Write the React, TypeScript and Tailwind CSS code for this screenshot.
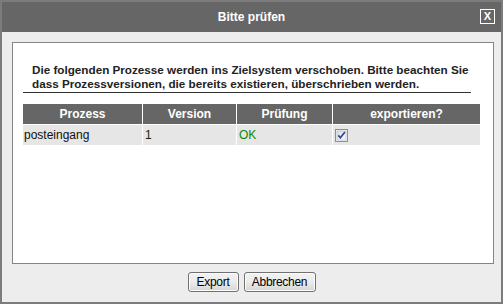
import React from 'react'

const cols = ['w-[119px]', 'w-[93px]', 'w-[95px]', 'w-[147px]']

function CheckBox() {
  return (
    <svg width="13" height="13" viewBox="0 0 13 13" className="block">
      <defs>
        <linearGradient id="cb" x1="0" y1="0" x2="1" y2="1">
          <stop offset="0" stopColor="#dcdcdc" />
          <stop offset="1" stopColor="#fbfbfb" />
        </linearGradient>
      </defs>
      <rect x="0.5" y="0.5" width="12" height="12" fill="#f4f4f4" stroke="#8e8f8f" />
      <rect x="2" y="2" width="9" height="9" fill="url(#cb)" stroke="#b6b7b8" strokeWidth="0.6" />
      <path d="M3.3 6.4 L5.4 8.8 L9.9 2.9" fill="none" stroke="#29439b" strokeWidth="1.6" />
    </svg>
  )
}

function Button({ label, w }: { label: string; w: string }) {
  return (
    <button
      className={`${w} h-[20px] rounded-[3px] border border-[#707070] bg-gradient-to-b from-[#f2f2f2] via-[#ebebeb] to-[#d6d6d6] text-[12px] leading-none text-black tracking-[-0.3px] shadow-[inset_0_0_0_1px_#fcfcfc]`}
    >
      {label}
    </button>
  )
}

export default function App() {
  return (
    <div className="w-[503px] h-[304px] bg-[#ededed] border-2 border-[#7c7c7c] font-['Liberation_Sans',Arial,sans-serif] flex flex-col">
      {/* title bar */}
      <div className="h-[30px] bg-[#666666] flex items-center justify-center relative shrink-0">
        <span className="text-white font-bold text-[12px]">Bitte prüfen</span>
        <div className="absolute left-[478px] top-[7px] w-[15px] h-[15px] border border-white flex items-center justify-center">
          <span className="text-white font-bold text-[11px] leading-none">X</span>
        </div>
      </div>

      {/* content panel */}
      <div className="ml-[10px] mt-[10px] w-[482px] h-[222px] bg-white border border-[#858585] shrink-0 px-[10px]">
        <div className="mt-[20px] w-[448px] border-b border-[#333333] pl-[9px] pb-[1px] text-[11.7px] leading-[14px] font-bold text-[#222222] whitespace-nowrap">
          Die folgenden Prozesse werden ins Zielsystem verschoben. Bitte beachten Sie
          <br />
          dass Prozessversionen, die bereits existieren, überschrieben werden.
        </div>

        <div className="mt-[11px] flex flex-col gap-px">
          <div className="flex gap-px">
            {['Prozess', 'Version', 'Prüfung', 'exportieren?'].map((h, i) => (
              <div key={h} className={`${cols[i]} h-[20px] bg-[#666666] text-white font-bold text-[12px] flex items-center justify-center`}>
                {h}
              </div>
            ))}
          </div>
          <div className="flex gap-px text-[12px]">
            <div className={`${cols[0]} h-[20px] bg-[#e6e6e6] pl-[1px] flex items-center text-[#111111]`}>posteingang</div>
            <div className={`${cols[1]} h-[20px] bg-[#e6e6e6] pl-[2px] flex items-center text-[#1a2a00]`}>1</div>
            <div className={`${cols[2]} h-[20px] bg-[#e6e6e6] pl-[2px] flex items-center text-[#0a8a0a]`}>OK</div>
            <div className={`${cols[3]} h-[20px] bg-[#e6e6e6] pl-[2px] flex items-center`}>
              <CheckBox />
            </div>
          </div>
        </div>
      </div>

      {/* buttons */}
      <div className="mt-[8px] flex justify-center gap-[5px]">
        <Button label="Export" w="w-[51px]" />
        <Button label="Abbrechen" w="w-[72px]" />
      </div>
    </div>
  )
}
